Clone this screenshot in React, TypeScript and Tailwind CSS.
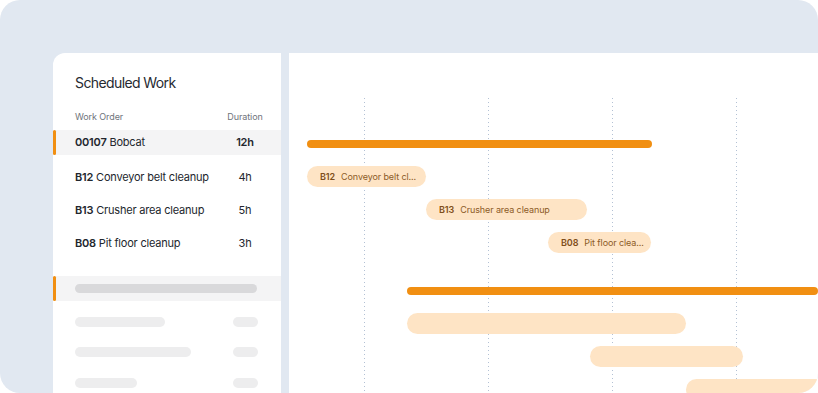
import React from 'react';

type Job = { code: string; name: string; hours: string };

const JOBS: Job[] = [
  { code: 'B12', name: 'Conveyor belt cleanup', hours: '4h' },
  { code: 'B13', name: 'Crusher area cleanup', hours: '5h' },
  { code: 'B08', name: 'Pit floor cleanup', hours: '3h' },
];

const SKELETONS = [
  { w: 90, h: 'h-[30px]' },
  { w: 116, h: 'h-[30px]' },
  { w: 62, h: 'h-[31px]' },
];

type Bar = { left: number; width: number; kind: 'parent' | 'child'; code?: string; label?: string };

// left offsets are px from the chart's left edge
const TOP_BARS: Bar[] = [
  { left: 18, width: 345, kind: 'parent' },
  { left: 18, width: 119, kind: 'child', code: 'B12', label: 'Conveyor belt cl...' },
  { left: 137, width: 161, kind: 'child', code: 'B13', label: 'Crusher area cleanup' },
  { left: 259, width: 103, kind: 'child', code: 'B08', label: 'Pit floor clea...' },
];

const BOTTOM_BARS: Bar[] = [
  { left: 118, width: 440, kind: 'parent' },
  { left: 118, width: 279, kind: 'child' },
  { left: 301, width: 153, kind: 'child' },
  { left: 397, width: 160, kind: 'child' },
];

const GRID = [75, 199, 323, 447];

const Indicator = () => <div className="w-[3px] h-full rounded-full bg-[#f18f12] shrink-0" />;

const GanttRow: React.FC<{ bar: Bar }> = ({ bar }) => (
  <div className="h-[33px] flex items-center">
    {bar.kind === 'parent' ? (
      <div className="h-[8px] rounded-full bg-[#f18f12]" style={{ marginLeft: bar.left, width: bar.width }} />
    ) : (
      <div
        className="h-[21px] rounded-full bg-[#fee4c5] flex items-center pl-[13px] gap-[6px] text-[9px] tracking-[-0.1px] whitespace-nowrap overflow-hidden shrink-0"
        style={{ marginLeft: bar.left, width: bar.width }}
      >
        {bar.code && <span className="font-semibold text-[#7f4e1a]">{bar.code}</span>}
        {bar.label && <span className="text-[#8c5b27]">{bar.label}</span>}
      </div>
    )}
  </div>
);

export default function App() {
  return (
    <div className="w-[818px] h-[393px] bg-[#e1e8f1] rounded-[20px] overflow-hidden pt-[53px] pl-[53px] flex gap-[8px] font-['Inter',sans-serif]">
      {/* Scheduled work list */}
      <div className="w-[228px] h-[360px] bg-white rounded-tl-[12px] shrink-0 flex flex-col">
        <div className="pl-[22px] pt-[20px] text-[14px] tracking-[-0.6px] leading-[20px] text-[#262a31]">Scheduled Work</div>
        <div className="flex items-center justify-between pl-[22px] pr-[16px] mt-[17px] h-[14px] text-[9px] tracking-[-0.1px] text-[#6f747c]">
          <span>Work Order</span>
          <span className="w-[40px] text-center">Duration</span>
        </div>
        <div className="mt-[6px] h-[25px] bg-[#f4f4f5] flex">
          <Indicator />
          <div className="flex-1 flex items-center justify-between pl-[19px] pr-[16px] text-[11px] tracking-[-0.2px] text-[#22262d]">
            <span>
              <span className="font-semibold">00107</span> Bobcat
            </span>
            <span className="w-[40px] text-center font-semibold">12h</span>
          </div>
        </div>
        <div className="mt-[6px]">
          {JOBS.map((job) => (
            <div
              key={job.code}
              className="h-[33px] flex items-center justify-between pl-[22px] pr-[16px] text-[11px] tracking-[-0.2px] text-[#22262d]"
            >
              <span>
                <span className="font-semibold">{job.code}</span> {job.name}
              </span>
              <span className="w-[40px] text-center">{job.hours}</span>
            </div>
          ))}
        </div>
        <div className="mt-[16px] h-[25px] bg-[#f4f4f5] flex">
          <Indicator />
          <div className="flex-1 flex items-center pl-[19px] pr-[24px]">
            <div className="h-[9px] w-full rounded-full bg-[#d9d9db]" />
          </div>
        </div>
        <div className="mt-[6px]">
          {SKELETONS.map((s, i) => (
            <div key={i} className={`${s.h} flex items-center justify-between pl-[22px] pr-[23px]`}>
              <div className="h-[10px] rounded-full bg-[#ededee]" style={{ width: s.w }} />
              <div className="h-[10px] w-[25px] rounded-full bg-[#ededee]" />
            </div>
          ))}
        </div>
      </div>

      {/* Gantt chart */}
      <div className="flex-1 h-[360px] bg-white relative overflow-hidden">
        {GRID.map((x) => (
          <div
            key={x}
            className="absolute top-[45px] bottom-0 w-px bg-[repeating-linear-gradient(to_bottom,#b3c1d4_0_1px,transparent_1px_4px)]"
            style={{ left: x }}
          />
        ))}
        <div className="relative pt-[74px]">
          {TOP_BARS.map((b, i) => (
            <GanttRow key={i} bar={b} />
          ))}
          <div className="mt-[15px]">
            {BOTTOM_BARS.map((b, i) => (
              <GanttRow key={i} bar={b} />
            ))}
          </div>
        </div>
      </div>
    </div>
  );
}
